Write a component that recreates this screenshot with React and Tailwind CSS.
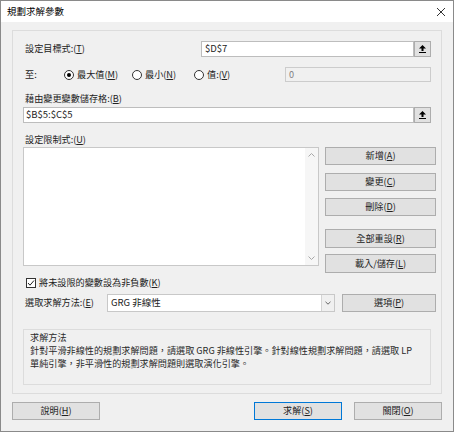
import React from "react";

const U = ({ c }) => <span className="underline">{c}</span>;

function RefBtn() {
  return (
    <div className="w-[17px] h-[16px] bg-[#e1e1e1] border border-[#adadad] flex items-center justify-center">
      <svg width="9" height="10" viewBox="0 0 9 10">
        <path d="M4.5 1 L8 4.5 L5.5 4.5 L5.5 7 L3.5 7 L3.5 4.5 L1 4.5 Z" fill="#000" />
        <rect x="1" y="8" width="7" height="1" fill="#000" />
      </svg>
    </div>
  );
}

function Btn({ children, className = "", def = false }) {
  return (
    <div
      className={
        "flex items-center justify-center bg-[#e1e1e1] border " +
        (def ? "border-[#0078d7] " : "border-[#adadad] ") +
        className
      }
    >
      {children}
    </div>
  );
}

function Radio({ checked }) {
  return (
    <div className="w-[10px] h-[10px] rounded-full border border-[#333] bg-white flex items-center justify-center shrink-0">
      {checked && <div className="w-[4px] h-[4px] rounded-full bg-[#000]" />}
    </div>
  );
}

export default function App() {
  return (
    <div
      className="w-[454px] h-[432px] border border-[#8a8a8a] bg-[#f0f0f0] flex flex-col text-[9.15px] text-[#222] leading-none"
      style={{ fontFamily: '"Noto Sans CJK TC", "Noto Sans", sans-serif' }}
    >
      {/* Title bar */}
      <div className="h-[21px] bg-white flex items-center justify-between pl-[6px] pr-[7px] shrink-0">
        <span className="text-[9.5px] text-black">規劃求解參數</span>
        <svg width="10" height="10" viewBox="0 0 10 10">
          <path d="M1 1 L9 9 M9 1 L1 9" stroke="#333" strokeWidth="1" />
        </svg>
      </div>

      <div className="px-[11px] flex flex-col">
        {/* Panel */}
        <div className="mt-[8px] border border-[#dcdcdc] pl-[10px] pb-[8px] flex flex-col">
          {/* Row 1 */}
          <div className="mt-[10px] h-[16px] flex items-center">
            <div className="w-[178px] pl-[2px]">
              設定目標式:(<U c="T" />)
            </div>
            <div className="w-[213px] h-[16px] bg-white border border-[#bdbdbd] flex items-center pl-[3px] text-[9.5px]">
              $D$7
            </div>
            <RefBtn />
          </div>

          {/* Row 2 */}
          <div className="mt-[10px] h-[15px] flex items-center">
            <div className="w-[41px] pl-[2px]">至:</div>
            <div className="w-[68px] flex items-center gap-[3px]">
              <Radio checked />
              <span>
                最大值(<U c="M" />)
              </span>
            </div>
            <div className="w-[62px] flex items-center gap-[3px]">
              <Radio />
              <span>
                最小(<U c="N" />)
              </span>
            </div>
            <div className="w-[91px] flex items-center gap-[3px]">
              <Radio />
              <span>
                值:(<U c="V" />)
              </span>
            </div>
            <div className="w-[146px] h-[15px] bg-[#f0f0f0] border border-[#cccccc] flex items-center pl-[3px] text-[#808080]">
              0
            </div>
          </div>

          {/* Label 3 */}
          <div className="mt-[10px] h-[14px] flex items-center pl-[2px]">
            藉由變更變數儲存格:(<U c="B" />)
          </div>
          <div className="mt-[1px] h-[16px] flex items-center">
            <div className="w-[391px] h-[16px] bg-white border border-[#bdbdbd] flex items-center pl-[2px] text-[9.5px]">
              $B$5:$C$5
            </div>
            <RefBtn />
          </div>

          {/* Label 4 */}
          <div className="mt-[10px] h-[14px] flex items-center pl-[2px]">
            設定限制式:(<U c="U" />)
          </div>
          <div className="h-[126px] flex">
            <div className="w-[296px] h-[119px] bg-white border border-[#c8c8c8] flex justify-end">
              <div className="w-[13px] h-full bg-[#f6f6f6] flex flex-col items-center justify-between py-[5px]">
                <svg width="7" height="4" viewBox="0 0 7 4">
                  <path d="M0.5 3.5 L3.5 0.5 L6.5 3.5" stroke="#a8a8a8" fill="none" />
                </svg>
                <svg width="7" height="4" viewBox="0 0 7 4">
                  <path d="M0.5 0.5 L3.5 3.5 L6.5 0.5" stroke="#a8a8a8" fill="none" />
                </svg>
              </div>
            </div>
            <div className="ml-[6px] w-[111px] flex flex-col">
              <Btn className="h-[18px]">
                新增(<U c="A" />)
              </Btn>
              <Btn className="h-[18px] mt-[8px]">
                變更(<U c="C" />)
              </Btn>
              <Btn className="h-[18px] mt-[7px]">
                刪除(<U c="D" />)
              </Btn>
              <Btn className="h-[19px] mt-[13px]">
                全部重設(<U c="R" />)
              </Btn>
              <Btn className="h-[19px] mt-[6px]">
                載入/儲存(<U c="L" />)
              </Btn>
            </div>
          </div>

          {/* Checkbox */}
          <div className="mt-[4px] h-[12px] flex items-center pl-[3px] gap-[3px]">
            <div className="w-[10px] h-[10px] border border-[#333] bg-white flex items-center justify-center">
              <svg width="8" height="8" viewBox="0 0 8 8">
                <path d="M1 4 L3 6.2 L7 1.5" stroke="#222" strokeWidth="1" fill="none" />
              </svg>
            </div>
            <span>
              將未設限的變數設為非負數(<U c="K" />)
            </span>
          </div>

          {/* Method row */}
          <div className="mt-[5px] h-[18px] flex items-center">
            <div className="w-[84px] pl-[2px]">
              選取求解方法:(<U c="E" />)
            </div>
            <div className="w-[228px] h-[18px] bg-white border border-[#c8c8c8] flex items-center">
              <div className="flex-1 pl-[3px] text-[9.5px]">GRG 非線性</div>
              <div className="w-[13px] h-full bg-[#f0f0f0] border-l border-[#d4d4d4] flex items-center justify-center">
                <svg width="6" height="4" viewBox="0 0 6 4">
                  <path d="M0.5 0.8 L3 3.2 L5.5 0.8" stroke="#666" fill="none" />
                </svg>
              </div>
            </div>
            <Btn className="ml-[7px] w-[94px] h-[18px]">
              選項(<U c="P" />)
            </Btn>
          </div>

          {/* Group */}
          <div className="mt-[17px] w-[408px] h-[56px] border border-[#dcdcdc] pl-[6px] pt-[1px] flex flex-col text-[#2a2a2a]">
            <div className="h-[13px] flex items-center">求解方法</div>
            <div className="h-[13px] flex items-center whitespace-nowrap">
              針對平滑非線性的規劃求解問題，請選取 GRG 非線性引擎。針對線性規劃求解問題，請選取 LP
            </div>
            <div className="h-[13px] flex items-center whitespace-nowrap">
              單純引擎，非平滑性的規劃求解問題則選取演化引擎。
            </div>
          </div>
        </div>

        {/* Bottom buttons */}
        <div className="mt-[8px] flex justify-between">
          <Btn className="w-[88px] h-[18px]">
            說明(<U c="H" />)
          </Btn>
          <div className="flex gap-[12px]">
            <Btn className="w-[88px] h-[18px]" def>
              求解(<U c="S" />)
            </Btn>
            <Btn className="w-[88px] h-[18px]">
              關閉(<U c="O" />)
            </Btn>
          </div>
        </div>
      </div>
    </div>
  );
}
